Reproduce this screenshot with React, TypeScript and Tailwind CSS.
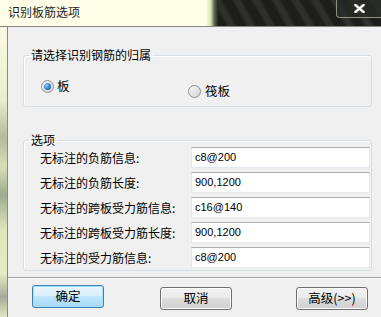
import React from "react";

const cjk = "font-['Noto_Sans_CJK_SC','Noto_Sans',sans-serif]";

const rows = [
  { label: "无标注的负筋信息:", value: "c8@200" },
  { label: "无标注的负筋长度:", value: "900,1200" },
  { label: "无标注的跨板受力筋信息:", value: "c16@140" },
  { label: "无标注的跨板受力筋长度:", value: "900,1200" },
  { label: "无标注的受力筋信息:", value: "c8@200" },
];

const Radio = ({ checked }: { checked?: boolean }) => (
  <div className="w-[13px] h-[13px] rounded-full border border-[#8e8f8f] bg-gradient-to-br from-[#f6f6f6] to-[#d4d4d4] flex items-center justify-center shrink-0">
    {checked && (
      <div className="w-[7px] h-[7px] rounded-full bg-[radial-gradient(circle_at_35%_35%,#8fd0f7_0%,#2a7fd0_55%,#134f94_100%)]" />
    )}
  </div>
);

const Button = ({ label, primary }: { label: string; primary?: boolean }) => (
  <button
    className={
      primary
        ? `w-[72px] h-[23px] rounded-[3px] border border-[#3c7fb1] bg-[linear-gradient(#eaf6fd,#d9f0fc_45%,#bee6fd_50%,#a7d9f5)] shadow-[inset_0_0_0_1px_#9fe1ff] text-[12.5px] text-black ${cjk}`
        : `w-[72px] h-[23px] rounded-[3px] border border-[#707070] bg-[linear-gradient(#f2f2f2,#ebebeb_45%,#dddddd_50%,#cfcfcf)] shadow-[inset_0_0_0_1px_#fcfcfc] text-[12.5px] text-black ${cjk}`
    }
  >
    {label}
  </button>
);

export default function App() {
  return (
    <div className="w-[381px] h-[317px] flex flex-col overflow-hidden bg-[#f0f0f0]">
      {/* title bar */}
      <div className="flex h-[26px] shrink-0">
        <div className={`w-[206px] bg-[#ffffe9] pl-[8px] pt-[4px] text-[12px] leading-[16px] text-[#1e1e1e] ${cjk}`}>
          识别板筋选项
        </div>
        <div className="w-[12px] bg-[linear-gradient(90deg,#ffffe9,#d2e6ac_40%,#5d6452_70%,#24251f)]" />
        <div className="flex-1 flex justify-end bg-[repeating-linear-gradient(60deg,#1d1e1a_0px,#1d1e1a_7px,#2e302a_10px,#2e302a_14px,#1d1e1a_17px)]">
          <div className="w-[45px] h-[18px] border-l border-b border-[#8d917f] rounded-bl-[4px] flex items-center justify-center bg-[#2a2c26]/70">
            <svg width="11" height="9" viewBox="0 0 11 9">
              <path d="M1.5 1 L9.5 8 M9.5 1 L1.5 8" stroke="#5a5e55" strokeWidth="3.6" strokeLinecap="square" />
              <path d="M1.5 1 L9.5 8 M9.5 1 L1.5 8" stroke="#ffffff" strokeWidth="2.2" strokeLinecap="square" />
            </svg>
          </div>
        </div>
      </div>
      <div className="h-px bg-[#858585] shrink-0" />

      <div className="flex flex-1">
        {/* left window frame */}
        <div className="w-[7px] bg-[linear-gradient(#fafae4,#e9efca_25%,#b3bb98_38%,#d6dfb4_48%,#a2aa90_58%,#dde6b8_70%,#e4ecc2_85%,#a5ab98_93%,#dfe7bf)]" />
        <div className="w-px bg-[#8a8a80]" />

        {/* client area */}
        <div className="flex-1 flex flex-col bg-[#f0f0f0]">
          <fieldset className="ml-[15px] mr-[9px] mt-[21px] h-[59px] border border-[#d5dfe5] rounded-[3px] shadow-[inset_1px_1px_0_#ffffff]">
            <legend className={`ml-[5px] px-[2px] text-[12px] leading-[14px] text-black ${cjk}`}>
              请选择识别钢筋的归属
            </legend>
            <div className="flex pt-[17px] pl-[17px]">
              <div className="w-[147px] flex items-center gap-[3px] h-[14px]">
                <Radio checked />
                <span className={`text-[12.5px] leading-[14px] text-black ${cjk}`}>板</span>
              </div>
              <div className="flex items-center gap-[4px] h-[14px] mt-[5px]">
                <Radio />
                <span className={`text-[12.5px] leading-[14px] text-black ${cjk}`}>筏板</span>
              </div>
            </div>
          </fieldset>

          <fieldset className="ml-[15px] mr-[9px] mt-[26px] h-[138px] border border-[#d5dfe5] rounded-[3px] shadow-[inset_1px_1px_0_#ffffff]">
            <legend className={`ml-[5px] px-[2px] text-[12px] leading-[14px] text-black ${cjk}`}>选项</legend>
            <div className="flex flex-col gap-[4px] pl-[16px] pr-px">
              {rows.map((r) => (
                <div key={r.label} className="flex items-center h-[21px]">
                  <div className={`w-[151px] text-[12px] leading-[15px] text-black whitespace-nowrap ${cjk}`}>
                    {r.label}
                  </div>
                  <div className="flex-1 h-[21px] bg-white border border-[#e3e9ef] border-t-[#abadb3] flex items-center pl-[3px] text-[11px] text-black font-['Liberation_Sans',Arial,sans-serif]">
                    {r.value}
                  </div>
                </div>
              ))}
            </div>
          </fieldset>

          <div className="mt-[6px] h-px bg-[#a0a0a0]" />
          <div className="h-px bg-white" />

          <div className="flex mt-[6px] pl-[24px]">
            <Button label="确定" primary />
            <div className="ml-[56px]">
              <Button label="取消" />
            </div>
            <div className="ml-[64px]">
              <Button label="高级(>>)" />
            </div>
          </div>
        </div>
      </div>
    </div>
  );
}
